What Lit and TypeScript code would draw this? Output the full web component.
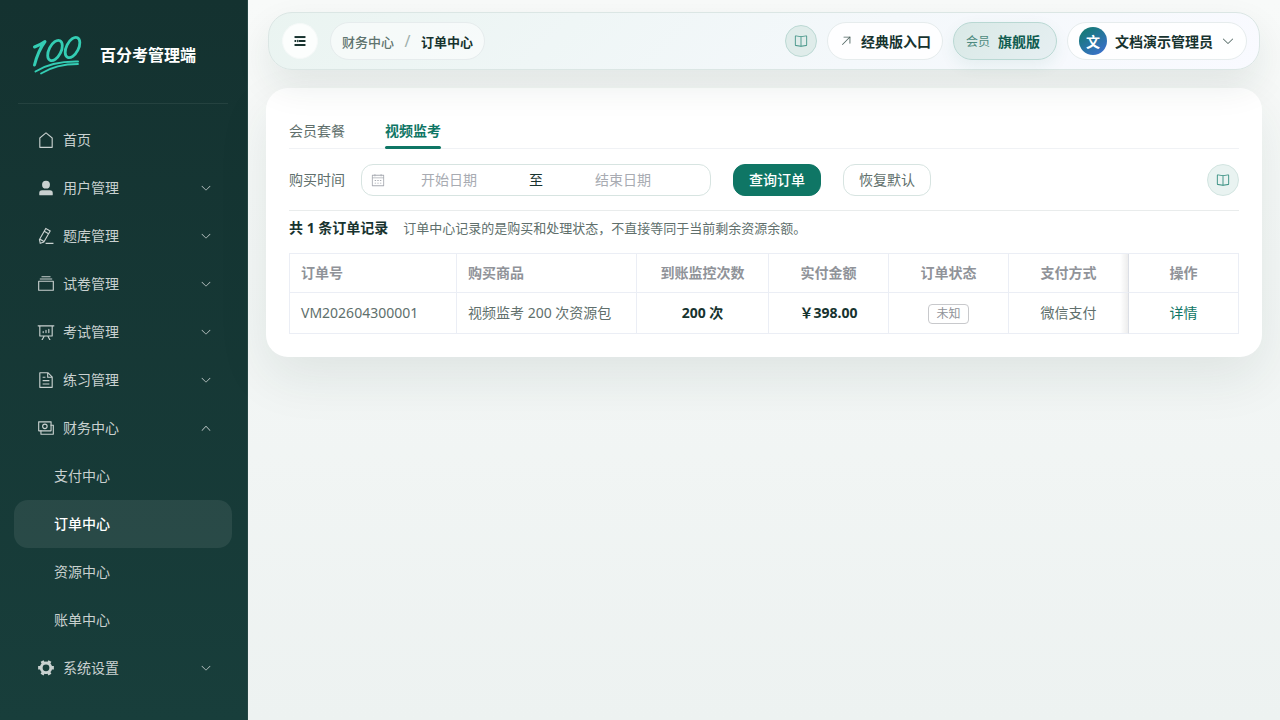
import { LitElement, html, css, svg, nothing } from "lit";
import { customElement, property, state } from "lit/decorators.js";
import { classMap } from "lit/directives/class-map.js";

const ICONS: Record<string, string[]> = {
  home: [
    "M192 413.952V896h640V413.952L512 147.328zM139.52 374.4l352-293.312a32 32 0 0 1 40.96 0l352 293.312A32 32 0 0 1 896 398.976V928a32 32 0 0 1-32 32H160a32 32 0 0 1-32-32V398.976a32 32 0 0 1 11.52-24.576",
  ],
  user: [
    "M288 320a224 224 0 1 0 448 0 224 224 0 1 0-448 0m544 608H160a32 32 0 0 1-32-32v-96a160 160 0 0 1 160-160h448a160 160 0 0 1 160 160v96a32 32 0 0 1-32 32z",
  ],
  pen: [
    "m199.04 672.64 193.984 112 224-387.968-193.92-112-224 388.032zm-23.872 60.16 32.896 148.288 144.896-45.696zM455.04 229.248l193.92 112 56.704-98.112-193.984-112zM104.32 708.8l384-665.024 304.768 175.936L409.152 884.8h.064l-248.448 78.336zm384 254.272v-64h448v64z",
  ],
  files: [
    "M128 384v448h768V384zm-32-64h832a32 32 0 0 1 32 32v512a32 32 0 0 1-32 32H96a32 32 0 0 1-32-32V352a32 32 0 0 1 32-32m64-128h704v64H160zm96-128h512v64H256z",
  ],
  board: [
    "m665.216 768 110.848 192h-73.856L591.36 768H433.024L322.176 960H248.32l110.848-192H160a32 32 0 0 1-32-32V192H64a32 32 0 0 1 0-64h896a32 32 0 1 1 0 64h-64v544a32 32 0 0 1-32 32zM832 192H192v512h640zM352 448a32 32 0 0 1 32 32v64a32 32 0 0 1-64 0v-64a32 32 0 0 1 32-32m160-64a32 32 0 0 1 32 32v128a32 32 0 0 1-64 0V416a32 32 0 0 1 32-32m160-64a32 32 0 0 1 32 32v192a32 32 0 1 1-64 0V352a32 32 0 0 1 32-32",
  ],
  doc: [
    "M832 384H576V128H192v768h640zm-26.496-64L640 154.496V320zM160 64h480l256 256v608a32 32 0 0 1-32 32H160a32 32 0 0 1-32-32V96a32 32 0 0 1 32-32m160 448h384v64H320zm0-192h160v64H320zm0 384h384v64H320z",
  ],
  money: [
    "M256 640v192h640V384H768v-64h150.976c14.272 0 19.456 1.472 24.64 4.288a29.056 29.056 0 0 1 12.16 12.096c2.752 5.184 4.224 10.368 4.224 24.64v493.952c0 14.272-1.472 19.456-4.288 24.64a29.056 29.056 0 0 1-12.096 12.16c-5.184 2.752-10.368 4.224-24.64 4.224H233.024c-14.272 0-19.456-1.472-24.64-4.288a29.056 29.056 0 0 1-12.16-12.096c-2.688-5.184-4.224-10.368-4.224-24.576V640z",
    "M768 192H128v448h640zm64-22.976v493.952c0 14.272-1.472 19.456-4.288 24.64a29.056 29.056 0 0 1-12.096 12.16c-5.184 2.752-10.368 4.224-24.64 4.224H105.024c-14.272 0-19.456-1.472-24.64-4.288a29.056 29.056 0 0 1-12.16-12.096C65.536 682.432 64 677.248 64 663.04V169.024c0-14.272 1.472-19.456 4.288-24.64a29.056 29.056 0 0 1 12.096-12.16C85.568 129.536 90.752 128 104.96 128h685.952c14.272 0 19.456 1.472 24.64 4.288a29.056 29.056 0 0 1 12.16 12.096c2.752 5.184 4.224 10.368 4.224 24.64z",
    "M448 576a160 160 0 1 1 0-320 160 160 0 0 1 0 320m0-64a96 96 0 1 0 0-192 96 96 0 0 0 0 192",
  ],
  gear: [
    "M764.416 254.72a351.68 351.68 0 0 1 86.336 149.184H960v192.064H850.752a351.68 351.68 0 0 1-86.336 149.312l54.72 94.72-166.272 96-54.592-94.72a352.64 352.64 0 0 1-172.48 0L371.136 936l-166.272-96 54.72-94.72a351.68 351.68 0 0 1-86.336-149.312H64v-192h109.248a351.68 351.68 0 0 1 86.336-149.312L204.8 160l166.208-96h.192l54.656 94.592a352.64 352.64 0 0 1 172.48 0L652.8 64h.128L819.2 160l-54.72 94.72zM704 499.968a192 192 0 1 0-384 0 192 192 0 0 0 384 0",
  ],
  down: [
    "M831.872 340.864 512 652.672 192.128 340.864a30.592 30.592 0 0 0-42.752 0 29.12 29.12 0 0 0 0 41.6L489.664 714.24a32 32 0 0 0 44.672 0l340.288-331.712a29.12 29.12 0 0 0 0-41.728 30.592 30.592 0 0 0-42.752 0z",
  ],
  up: [
    "m488.832 344.32-339.84 356.672a32 32 0 0 0 0 44.16l.384.384a29.44 29.44 0 0 0 42.688 0l320-335.872 319.872 335.872a29.44 29.44 0 0 0 42.688 0l.384-.384a32 32 0 0 0 0-44.16L535.168 344.32a32 32 0 0 0-46.336 0",
  ],
  book: [
    "m512 863.36 384-54.848v-638.72L525.568 222.72a96 96 0 0 1-27.136 0L128 169.792v638.72zM137.024 106.432l370.432 52.928a32 32 0 0 0 9.088 0l370.432-52.928A64 64 0 0 1 960 169.792v638.72a64 64 0 0 1-54.976 63.36l-388.48 55.488a32 32 0 0 1-9.088 0l-388.48-55.488A64 64 0 0 1 64 808.512v-638.72a64 64 0 0 1 73.024-63.36",
    "M480 192h64v704h-64z",
  ],
  jump: [
    "M768 256H353.6a32 32 0 1 1 0-64H800a32 32 0 0 1 32 32v448a32 32 0 0 1-64 0z",
    "M777.344 201.344a32 32 0 0 1 45.312 45.312l-544 544a32 32 0 0 1-45.312-45.312z",
  ],
  calendar: [
    "M128 384v512h768V192H768v32a32 32 0 1 1-64 0v-32H320v32a32 32 0 0 1-64 0v-32H128v128h768v64zm192-256h384V96a32 32 0 1 1 64 0v32h160a32 32 0 0 1 32 32v768a32 32 0 0 1-32 32H96a32 32 0 0 1-32-32V160a32 32 0 0 1 32-32h160V96a32 32 0 0 1 64 0zm-32 384h64a32 32 0 0 1 0 64h-64a32 32 0 0 1 0-64m0 192h64a32 32 0 1 1 0 64h-64a32 32 0 1 1 0-64m192-192h64a32 32 0 0 1 0 64h-64a32 32 0 0 1 0-64m0 192h64a32 32 0 1 1 0 64h-64a32 32 0 1 1 0-64m192-192h64a32 32 0 1 1 0 64h-64a32 32 0 1 1 0-64m0 192h64a32 32 0 1 1 0 64h-64a32 32 0 1 1 0-64",
  ],
  fold: ["M112 150h800v146H112z", "M112 440h110v146H112z", "M240 512l130-110v220z", "M400 440h512v146H400z", "M112 730h800v146H112z"],
};

@customElement("ui-icon")
class UiIcon extends LitElement {
  @property() name = "";
  static styles = css`
    :host { display: inline-flex; width: 1em; height: 1em; flex: none; }
    svg { width: 100%; height: 100%; fill: currentColor; display: block; }
  `;
  render() {
    return html`<svg viewBox="0 0 1024 1024" aria-hidden="true">
      ${(ICONS[this.name] ?? []).map((d) => svg`<path d=${d}></path>`)}
    </svg>`;
  }
}

interface MenuEntry {
  label: string;
  icon: string;
  children?: string[];
  leaf?: boolean;
}

const MENU: MenuEntry[] = [
  { label: "首页", icon: "home", leaf: true },
  { label: "用户管理", icon: "user" },
  { label: "题库管理", icon: "pen" },
  { label: "试卷管理", icon: "files" },
  { label: "考试管理", icon: "board" },
  { label: "练习管理", icon: "doc" },
  { label: "财务中心", icon: "money", children: ["支付中心", "订单中心", "资源中心", "账单中心"] },
  { label: "系统设置", icon: "gear" },
];

@customElement("side-nav")
class SideNav extends LitElement {
  @state() private open = "财务中心";
  static styles = css`
    :host {
      display: block;
      box-sizing: border-box;
      border-right: 1px solid #254644;
      background: linear-gradient(180deg, #143230, #183e3b);
      padding: 0 15px 0 14px;
    }
    .brand {
      display: flex;
      align-items: center;
      gap: 16px;
      height: 104px;
      box-sizing: border-box;
      padding: 7px 0 0 10px;
      margin: 0 4px;
      border-bottom: 1px solid rgba(255, 255, 255, 0.07);
    }
    .logo { width: 56px; height: 52px; flex: none; }
    .name { margin: 0; color: #fff; font-size: 16px; font-weight: 700; line-height: 24px; white-space: nowrap; }
    nav { margin-top: 12px; }
    ul { list-style: none; margin: 0; padding: 0; }
    .item {
      display: flex;
      align-items: center;
      gap: 8px;
      width: 100%;
      height: 48px;
      box-sizing: border-box;
      padding: 0 20px 0 23px;
      border: 0;
      border-radius: 14px;
      background: none;
      color: #c9d1d0;
      font: inherit;
      font-size: 14px;
      text-align: left;
      text-decoration: none;
      cursor: pointer;
    }
    .icon { font-size: 18px; }
    .label { flex: 1; padding-bottom: 2px; }
    .arrow { font-size: 12px; }
    .sub { padding-left: 40px; }
    .active { background: rgba(255, 255, 255, 0.08); color: #fff; font-weight: 500; }
  `;
  render() {
    return html`
      <div class="brand">
        <svg class="logo" viewBox="0 0 56 52" aria-hidden="true">
          <g fill="none" stroke="#34cdb4" stroke-linecap="round" stroke-linejoin="round">
            <path d="M6.500 18Q12 16 17 12.500Q10 22 6.500 36" stroke-width="3"></path>
            <ellipse cx="27" cy="21.500" rx="6" ry="11" transform="rotate(27 27 21.500)" stroke-width="2.800"></ellipse>
            <ellipse cx="44.500" cy="18.500" rx="6" ry="11" transform="rotate(27 44.500 18.500)" stroke-width="2.800"></ellipse>
            <path d="M7.500 42.500Q24 32 50 32.500" stroke-width="2"></path>
            <path d="M13 44.500Q28 35 50 35" stroke-width="1.800"></path>
          </g>
        </svg>
        <h1 class="name">百分考管理端</h1>
      </div>
      <nav aria-label="主菜单"><ul>${MENU.map((m) => this.entry(m))}</ul></nav>
    `;
  }
  private entry(m: MenuEntry) {
    if (m.leaf)
      return html`<li><a class="item" href="#"><ui-icon class="icon" name=${m.icon}></ui-icon><span class="label">${m.label}</span></a></li>`;
    const open = this.open === m.label;
    return html`<li>
      <button class="item" aria-expanded=${open ? "true" : "false"} @click=${() => (this.open = open ? "" : m.label)}>
        <ui-icon class="icon" name=${m.icon}></ui-icon>
        <span class="label">${m.label}</span>
        <ui-icon class="arrow" name=${open ? "up" : "down"}></ui-icon>
      </button>
      ${open && m.children
        ? html`<ul>${m.children.map(
            (c) => html`<li><a href="#" class=${classMap({ item: true, sub: true, active: c === "订单中心" })}><span class="label">${c}</span></a></li>`
          )}</ul>`
        : nothing}
    </li>`;
  }
}

@customElement("top-bar")
class TopBar extends LitElement {
  static styles = css`
    :host {
      display: flex;
      align-items: center;
      gap: 10px;
      box-sizing: border-box;
      position: relative;
      z-index: 1;
      padding: 9px 12px 9px 13px;
      border: 1px solid #dbe6e4;
      border-radius: 24px;
      background: linear-gradient(135deg, #eaf4f1, #f4f8fb 60%, #f9faff);
      box-shadow: 0 16px 36px rgba(20, 50, 45, 0.09);
      color: #17332f;
      font-size: 14px;
    }
    button, .pill {
      display: flex;
      align-items: center;
      gap: 8px;
      height: 38px;
      box-sizing: border-box;
      padding: 0 11px;
      border: 1px solid #e6eced;
      border-radius: 19px;
      background: rgba(255, 255, 255, 0.85);
      color: inherit;
      font: inherit;
      font-weight: 700;
      white-space: nowrap;
    }
    button { cursor: pointer; }
    .where { display: flex; align-items: center; gap: 12px; margin-right: auto; }
    .fold { width: 36px; height: 36px; padding: 0; justify-content: center; border-color: #f6faf9; }
    .fold ui-icon { font-size: 14px; }
    .crumbs { gap: 0; font-size: 13px; background: rgba(255, 255, 255, 0.5); }
    .crumbs a { color: #5f746f; text-decoration: none; font-weight: 500; }
    .slash { width: 27px; text-align: center; color: #9fb0ac; font-size: 16px; font-weight: 400; }
    .help { width: 32px; height: 32px; padding: 0; justify-content: center; background: #dfecea; border-color: #bcd9d4; color: #3f9184; }
    .plan { padding: 0 16px 0 12px; background: linear-gradient(135deg, #d9e9e6, #e6eff2); border-color: #b9d8d3; color: #0f5c50; box-shadow: 0 6px 16px rgba(20, 110, 95, 0.08); }
    .tier { font-size: 12px; font-weight: 400; color: #4d8a80; }
    .avatar { display: grid; place-items: center; width: 28px; height: 28px; border-radius: 50%; background: linear-gradient(145deg, #0f7b68, #3f6fd6); color: #fff; }
    .thin { color: #4c625e; }
  `;
  render() {
    return html`
      <div class="where">
        <button class="fold" aria-label="折叠菜单"><ui-icon name="fold"></ui-icon></button>
        <nav class="pill crumbs" aria-label="面包屑"><a href="#">财务中心</a><span class="slash">/</span><span>订单中心</span></nav>
      </div>
      <button class="help" aria-label="帮助文档"><ui-icon name="book"></ui-icon></button>
      <button><ui-icon class="thin" name="jump"></ui-icon>经典版入口</button>
      <div class="pill plan"><span class="tier">会员</span><span>旗舰版</span></div>
      <button><span class="avatar">文</span>文档演示管理员<ui-icon class="thin" name="down"></ui-icon></button>
    `;
  }
}

@customElement("order-panel")
class OrderPanel extends LitElement {
  @state() private tab = "视频监考";
  static styles = css`
    :host {
      display: block;
      box-sizing: border-box;
      padding: 23px;
      border-radius: 22px;
      background: #fff;
      box-shadow: 0 20px 52px rgba(20, 50, 45, 0.09);
      color: #606f6c;
      font-size: 14px;
      line-height: 20px;
    }
    button { font: inherit; cursor: pointer; box-sizing: border-box; }
    .tabs { display: flex; gap: 40px; height: 38px; box-sizing: border-box; border-bottom: 1px solid #f0f2f5; }
    .tab { position: relative; height: 38px; padding: 2px 0 0; border: 0; background: none; color: inherit; }
    .current { color: #0f7665; font-weight: 700; }
    .current::after { content: ""; position: absolute; left: 0; right: 0; bottom: 0; height: 3px; border-radius: 2px; background: #0f7665; }
    .filters { display: flex; align-items: center; gap: 22px; padding: 15px 0 14px; border-bottom: 1px solid #e9ecec; }
    .field { display: flex; align-items: center; gap: 16px; }
    .range { display: flex; align-items: center; width: 350px; height: 32px; box-sizing: border-box; padding: 0 9px; border: 1px solid #d7e4e1; border-radius: 12px; color: #a8abb2; }
    .range input { width: 128px; box-sizing: border-box; padding: 0; border: 0; outline: 0; background: none; font: inherit; text-align: center; color: #17332f; }
    .range input::placeholder { color: #a8abb2; opacity: 1; }
    .to { width: 46px; text-align: center; color: #17332f; }
    .btn { height: 32px; padding: 0 15px; border: 1px solid #d7e4e1; border-radius: 12px; background: #fff; color: #606f6c; white-space: nowrap; }
    .primary { background: #0f7665; border-color: #0f7665; color: #fff; font-weight: 500; }
    .help { display: grid; place-items: center; width: 32px; height: 32px; margin-left: auto; padding: 0; border: 1px solid #d3e5e1; border-radius: 50%; background: #e9f3f1; color: #2f8b7c; }
    .summary { display: flex; align-items: center; gap: 15px; padding: 7px 0 15px; }
    .summary strong { color: #17332f; }
    .summary p { margin: 0; font-size: 13px; }
    table { width: 100%; table-layout: fixed; border-collapse: separate; border-spacing: 0; border: solid #ebeef5; border-width: 1px 0 0 1px; }
    th, td { box-sizing: border-box; padding: 0 11px; border: solid #ebeef5; border-width: 0 1px 1px 0; text-align: center; }
    th { height: 39px; color: #909399; font-weight: 700; }
    td { height: 41px; }
    .left { text-align: left; }
    .w180 { width: 180px; }
    .w132 { width: 132px; }
    .w120 { width: 120px; }
    .w110 { width: 110px; }
    .edge { border-right-color: #dcdfe6; background: linear-gradient(90deg, transparent calc(100% - 8px), rgba(0, 0, 0, 0.07)); }
    .strong { color: #17332f; font-weight: 700; }
    .tag { display: inline-block; padding: 0 7px; border: 1px solid #c8c9cc; border-radius: 4px; font-size: 12px; line-height: 18px; color: #909399; vertical-align: middle; }
    .link { color: #0f7665; text-decoration: none; }
  `;
  render() {
    return html`
      <div class="tabs" role="tablist">
        ${["会员套餐", "视频监考"].map(
          (t) => html`<button role="tab" aria-selected=${t === this.tab ? "true" : "false"}
            class=${classMap({ tab: true, current: t === this.tab })} @click=${() => (this.tab = t)}>${t}</button>`
        )}
      </div>
      <div class="filters">
        <div class="field">
          <label for="from">购买时间</label>
          <div class="range">
            <ui-icon name="calendar"></ui-icon>
            <input id="from" type="text" placeholder="开始日期" />
            <span class="to">至</span>
            <input type="text" placeholder="结束日期" aria-label="结束日期" />
          </div>
        </div>
        <button class="btn primary">查询订单</button>
        <button class="btn">恢复默认</button>
        <button class="help" aria-label="帮助文档"><ui-icon name="book"></ui-icon></button>
      </div>
      <div class="summary"><strong>共 1 条订单记录</strong><p>订单中心记录的是购买和处理状态，不直接等同于当前剩余资源余额。</p></div>
      <table>
        <thead>
          <tr>
            <th class="left">订单号</th><th class="left w180">购买商品</th><th class="w132">到账监控次数</th>
            <th class="w120">实付金额</th><th class="w120">订单状态</th><th class="w120 edge">支付方式</th><th class="w110">操作</th>
          </tr>
        </thead>
        <tbody>
          <tr>
            <td class="left">VM202604300001</td><td class="left">视频监考 200 次资源包</td><td class="strong">200 次</td>
            <td class="strong">￥398.00</td><td><span class="tag">未知</span></td><td class="edge">微信支付</td>
            <td><a class="link" href="#">详情</a></td>
          </tr>
        </tbody>
      </table>
    `;
  }
}

@customElement("app-root")
class AppRoot extends LitElement {
  static styles = css`
    :host {
      display: grid;
      grid-template-columns: 248px minmax(0, 1fr);
      min-height: 100vh;
      background: linear-gradient(180deg, #f8faf9, #edf2f1);
      font-family: "Noto Sans", "Noto Sans CJK SC", sans-serif;
    }
    .page { padding: 12px 18px; }
    top-bar { margin: 0 2px 18px; }
  `;
  render() {
    return html`<side-nav></side-nav>
      <main class="page"><top-bar></top-bar><order-panel></order-panel></main>`;
  }
}
